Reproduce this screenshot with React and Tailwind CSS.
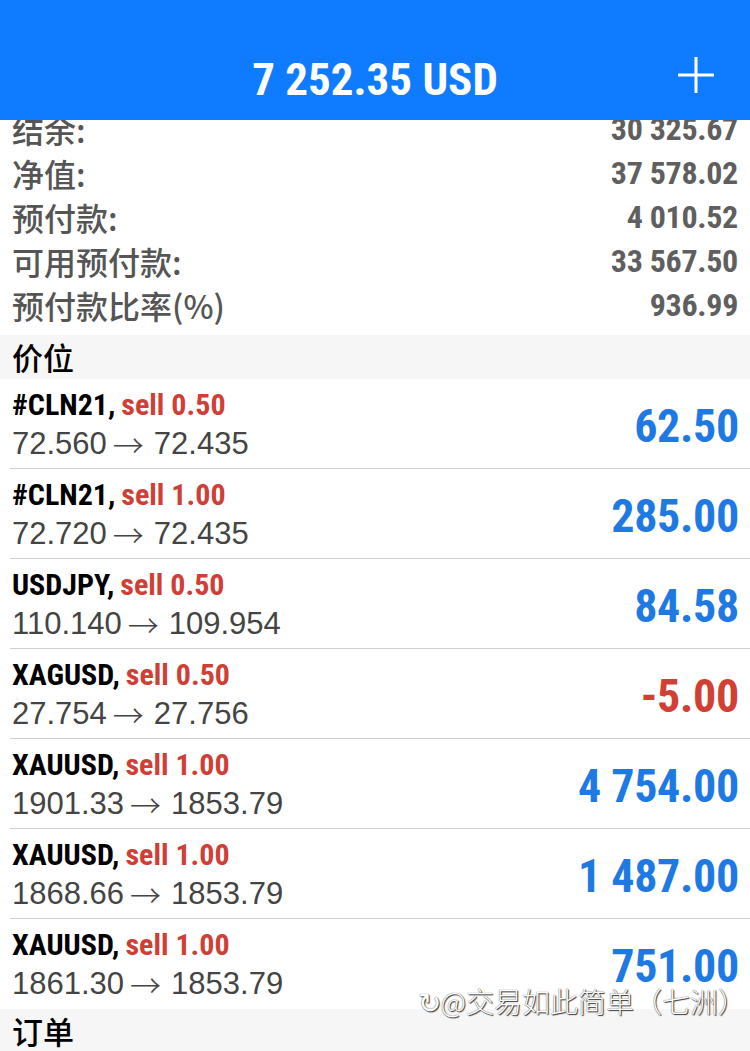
const summary = [
  { label: '结余:', value: '30 325.67' },
  { label: '净值:', value: '37 578.02' },
  { label: '预付款:', value: '4 010.52' },
  { label: '可用预付款:', value: '33 567.50' },
  { label: '预付款比率(%)', value: '936.99' },
];

const positions = [
  { symbol: '#CLN21', lots: '0.50', open: '72.560', current: '72.435', profit: '62.50' },
  { symbol: '#CLN21', lots: '1.00', open: '72.720', current: '72.435', profit: '285.00' },
  { symbol: 'USDJPY', lots: '0.50', open: '110.140', current: '109.954', profit: '84.58' },
  { symbol: 'XAGUSD', lots: '0.50', open: '27.754', current: '27.756', profit: '-5.00' },
  { symbol: 'XAUUSD', lots: '1.00', open: '1901.33', current: '1853.79', profit: '4 754.00' },
  { symbol: 'XAUUSD', lots: '1.00', open: '1868.66', current: '1853.79', profit: '1 487.00' },
  { symbol: 'XAUUSD', lots: '1.00', open: '1861.30', current: '1853.79', profit: '751.00' },
];

const SectionHeader = ({ title }) => (
  <div className="h-[44px] bg-[#f6f6f6] px-3 flex items-center text-[31px] text-black font-['Noto_Sans_CJK_SC',sans-serif] font-medium">
    {title}
  </div>
);

export default function App() {
  return (
    <div className="relative w-[750px] h-[1051px] overflow-hidden bg-white">
      {/* Top bar */}
      <div className="relative z-10 h-[120px] bg-[#0f7cff] pt-[38px] flex items-center justify-center">
        <span className="text-[45px] font-bold text-white leading-none font-['Roboto_Condensed',sans-serif]">
          7 252.35 USD
        </span>
        <svg className="absolute right-[36px] top-[57px] w-[36px] h-[36px]" viewBox="0 0 36 36">
          <path d="M18 0v36M0 18h36" stroke="white" strokeWidth="3" />
        </svg>
      </div>

      {/* Account summary */}
      <div className="-mt-[13px] pb-2">
        {summary.map((row) => (
          <div key={row.label} className="h-[44px] px-3 flex items-center justify-between">
            <span className="text-[32px] text-[#555] font-medium font-['Noto_Sans_CJK_SC',sans-serif]">
              {row.label}
            </span>
            <span className="text-[32px] font-bold text-[#5f5f5f] tracking-[-0.3px] font-['Roboto_Condensed',sans-serif]">
              {row.value}
            </span>
          </div>
        ))}
      </div>

      <SectionHeader title="价位" />

      {/* Positions */}
      <div>
        {positions.map((p, i) => (
          <div key={i} className="h-[90px] pl-3 pr-[11px] relative flex items-center justify-between">
            <div className="flex flex-col">
              <div className="h-[40px] flex items-center text-[30px] font-bold font-['Roboto_Condensed',sans-serif]">
                <span className="text-black">{p.symbol},</span>
                <span className="text-[#cf3f36] ml-[6px]">sell {p.lots}</span>
              </div>
              <div className="h-[40px] flex items-center text-[31px] text-[#444] font-['Liberation_Sans',sans-serif]">
                {p.open}
                <span className="ml-[6px] mr-[10px] font-['Noto_Sans_CJK_SC',sans-serif] font-light">→</span>
                {p.current}
              </div>
            </div>
            <span
              className={`text-[46px] font-bold tracking-[-0.3px] pt-1 font-['Roboto_Condensed',sans-serif] ${
                p.profit.startsWith('-') ? 'text-[#d23f35]' : 'text-[#1e7ae2]'
              }`}
            >
              {p.profit}
            </span>
            {i < positions.length - 1 && (
              <div className="absolute left-[10px] right-0 bottom-0 h-px bg-[#cfcfcf]" />
            )}
          </div>
        ))}
      </div>

      <SectionHeader title="订单" />

      {/* Watermark */}
      <div className="absolute right-[4px] top-[980px] text-[28px] text-white font-light font-['Noto_Sans_CJK_SC',sans-serif] [text-shadow:0_0_1px_#333,1px_1px_1px_#333]">
        ↻@交易如此简单（七洲）
      </div>
    </div>
  );
}
